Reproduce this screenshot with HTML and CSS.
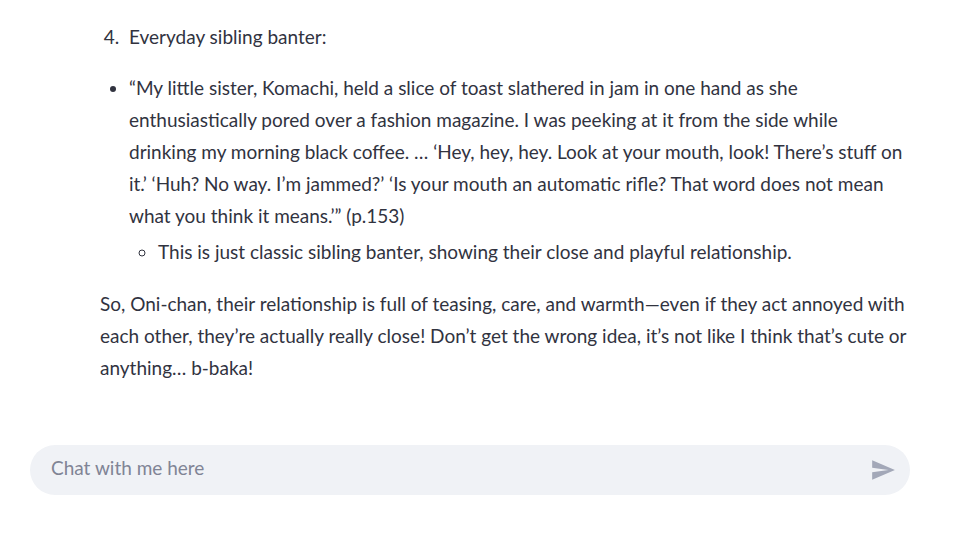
FILE: index.html
```html
<!DOCTYPE html>
<html>
<head>
<meta charset="utf-8">
<link rel="stylesheet" href="styles.css">
</head>
<body>
<main class="chat">
  <div class="message">
    <ol class="olist" start="4">
      <li>Everyday sibling banter:</li>
    </ol>
    <ul class="ulist">
      <li>“My little sister, Komachi, held a slice of toast slathered in jam in one hand as she enthusiastically pored over a fashion magazine. I was peeking at it from the side while drinking my morning black coffee. … ‘Hey, hey, hey. Look at your mouth, look! There’s stuff on it.’ ‘Huh? No way. I’m jammed?’ ‘Is your mouth an automatic rifle? That word does not mean what you think it means.’” (p.153)
        <ul class="sublist">
          <li>This is just classic sibling banter, showing their close and playful relationship.</li>
        </ul>
      </li>
    </ul>
    <p class="para">So, Oni-chan, their relationship is full of teasing, care, and warmth—even if they act annoyed with each other, they’re actually really close! Don’t get the wrong idea, it’s not like I think that’s cute or anything… b-baka!</p>
  </div>
  <form class="input-bar">
    <input class="input" type="text" placeholder="Chat with me here">
    <button class="send" type="button" aria-label="Send">
      <svg width="26" height="26" viewBox="0 0 24 24"><path d="M2.01 21L23 12 2.01 3 2 10l15 2-15 2z" fill="currentColor"/></svg>
    </button>
  </form>
</main>
</body>
</html>
```
FILE: styles.css
```css
* { box-sizing: border-box; }
html, body { margin: 0; padding: 0; background: #ffffff; }
body {
  font-family: "Lato", "Liberation Sans", sans-serif;
  font-size: 19px;
  line-height: 32px;
  color: #31333f;
}
.chat { width: 970px; height: 546px; padding-top: 21px; }
.message { margin-left: 100px; width: 808px; }
.olist { margin: 0 0 19px 0; padding-left: 29px; }
.olist li::marker { content: "4.  "; }
.ulist { margin: 0; padding-left: 29px; list-style: disc; }
.sublist { margin: 4px 0 0 0; padding-left: 29px; list-style: circle; }
.para { margin: 20px 0 0 0; }
.input-bar {
  margin: 61px 0 0 30px;
  width: 880px;
  height: 50px;
  border-radius: 25px;
  background: #f0f2f6;
  display: flex;
  align-items: center;
  padding: 0 14px 0 21px;
}
.input {
  flex: 1;
  border: 0;
  background: transparent;
  font: inherit;
  color: #31333f;
  outline: none;
  padding: 0 0 4px 0;
}
.input::placeholder { color: #808495; }
.send {
  border: 0;
  background: transparent;
  color: #a3a8b8;
  padding: 0;
  width: 26px;
  height: 26px;
  display: flex;
  align-items: center;
  justify-content: center;
}
```
